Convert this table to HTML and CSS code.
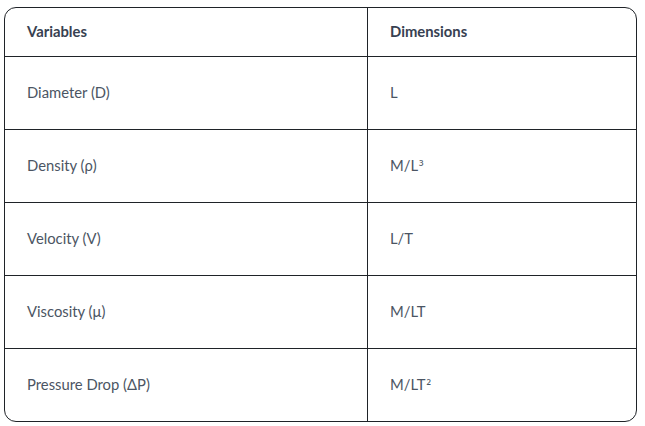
FILE: index.html
```html
<!DOCTYPE html>
<html>
<head>
<meta charset="utf-8">
<link rel="stylesheet" href="styles.css">
</head>
<body>
<div class="wrap">
  <table class="dims">
    <thead>
      <tr><th class="c1">Variables</th><th class="c2">Dimensions</th></tr>
    </thead>
    <tbody>
      <tr><td class="c1">Diameter (D)</td><td class="c2">L</td></tr>
      <tr><td class="c1">Density (ρ)</td><td class="c2">M/L<span class="sup">³</span></td></tr>
      <tr><td class="c1">Velocity (V)</td><td class="c2">L/T</td></tr>
      <tr><td class="c1">Viscosity (μ)</td><td class="c2">M/LT</td></tr>
      <tr><td class="c1">Pressure Drop (ΔP)</td><td class="c2">M/LT<span class="sup">²</span></td></tr>
    </tbody>
  </table>
</div>
</body>
</html>
```
FILE: styles.css
```css
html, body {
  margin: 0;
  padding: 0;
  background: #ffffff;
}
.wrap {
  padding: 7px 9px 0 4px;
}
.dims {
  width: 633px;
  table-layout: fixed;
  border-collapse: separate;
  border-spacing: 0;
  border: 1px solid #1f2328;
  border-radius: 12px;
  font-family: Lato, "Noto Sans", sans-serif;
  font-size: 14.8px;
}
.dims th, .dims td {
  text-align: left;
  padding: 0 0 2px 22px;
  vertical-align: middle;
  box-sizing: border-box;
}
.dims th {
  height: 48px;
  font-weight: 700;
  color: #374151;
}
.dims td {
  height: 73px;
  color: #4b5563;
  border-top: 1px solid #1f2328;
}
.dims .c1 {
  width: 363px;
  border-right: 1px solid #1f2328;
}
.sup {
  font-family: "Noto Sans", sans-serif;
  font-size: 13px;
  margin-left: 1px;
}
```
